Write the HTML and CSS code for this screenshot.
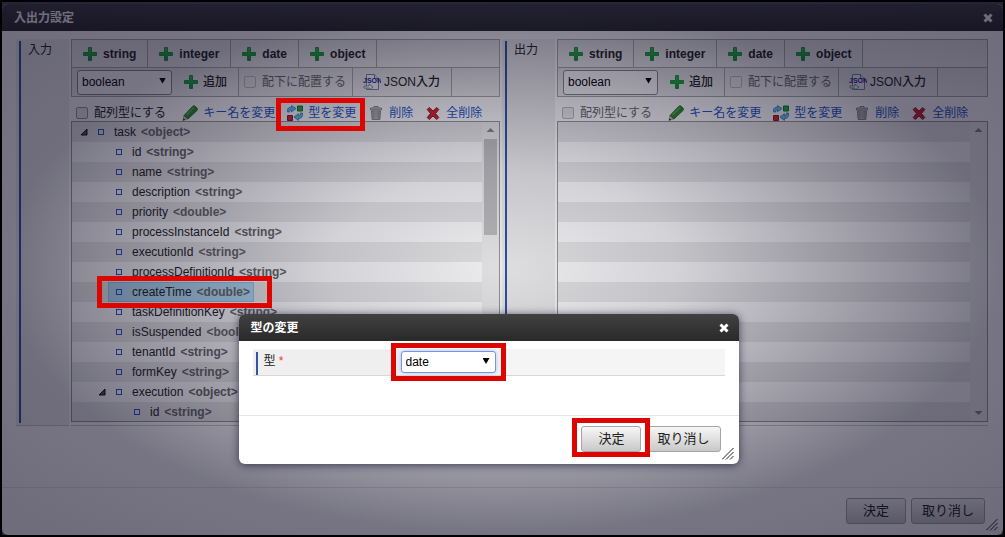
FILE: index.html
```html
<!DOCTYPE html>
<html lang="ja">
<head>
<meta charset="utf-8">
<title>入出力設定</title>
<link rel="stylesheet" href="styles.css">
</head>
<body>
<svg class="sprite" aria-hidden="true">
  <defs>
    <linearGradient id="green" x1="0" y1="0" x2="0" y2="1"><stop offset="0" stop-color="#35bd48"/><stop offset="1" stop-color="#089a2c"/></linearGradient>
    <linearGradient id="metal" x1="0" y1="0" x2="1" y2="0"><stop offset="0" stop-color="#a2a2a2"/><stop offset=".5" stop-color="#dcdcdc"/><stop offset="1" stop-color="#999"/></linearGradient>
  </defs>
  <symbol id="plus" viewBox="0 0 16 16"><path d="M6.500 1.500h3v5h5v3h-5v5h-3v-5h-5v-3h5z" fill="url(#green)" stroke="#1b9a3a"/></symbol>
  <symbol id="pencil" viewBox="0 0 16 16"><path d="M1 15.500 2 10.500 5.500 14z" fill="#e9cf9f" stroke="#86704b" stroke-width=".6"/><path d="m1 15.500.6-2.200 1.600 1.500z" fill="#222"/><path d="M2 10.500 10.500 1.500c1-1 2-1 3 0l1.500 1.500c.8.8.8 1.600 0 2.500L6 14z" fill="#2f8a2c" stroke="#1b661c" stroke-width=".8"/><path d="m4.500 10 7.500-7.700" stroke="#5cae4c" stroke-width="1.500"/></symbol>
  <symbol id="types" viewBox="0 0 16 16"><path d="M10.500 1h5v5h-5z" fill="#22ae3d" stroke="#11772a"/><path d="M.5 10.500h5v5h-5z" fill="#d52535" stroke="#941522"/><path d="M.6 7V5.200C.6 3 2 2.200 4.500 2.200V.6L9 3.600 4.500 6.800V5C3 5 2.600 5.500 2.600 7z" fill="#69c1f2" stroke="#247cae" stroke-width=".8"/><path d="M15.400 8v2c0 2.600-1.500 3.400-4 3.400v2L7 12l4.400-3.300v2c1.600 0 2-.7 2-2.700z" fill="#69c1f2" stroke="#247cae" stroke-width=".8"/></symbol>
  <symbol id="trash" viewBox="0 0 16 16"><path d="M6 3V1.500h4V3" fill="none" stroke="#888"/><path d="M2.500 3h11v2h-11z" fill="#ccc" stroke="#888"/><path d="M3.500 6h9l-.6 8.500H4.100z" fill="url(#metal)" stroke="#888"/><path d="M6 7v6.500M8 7v6.500M10 7v6.500" stroke="#888"/></symbol>
  <symbol id="cross" viewBox="0 0 16 16"><path d="M4.200 2.500 8 6l3.800-3.500 2 2L10.500 8.500l3.300 4-2 2L8 11l-3.800 3.500-2-2 3.300-4-3.300-4z" fill="#d92331" stroke="#981a25"/></symbol>
  <symbol id="page" viewBox="0 0 18 16"><path d="M3.500.5h8l4 4v11h-12z" fill="#f4f9fc" stroke="#72889b"/><path d="M11.500.5v4h4" fill="#d8e7f0" stroke="#72889b"/><path d="M1 12h5v-2l4 3-4 3v-2H1z" fill="#fff" stroke="#66808e" stroke-width=".8"/></symbol>
  <symbol id="close" viewBox="0 0 10 10"><path d="m1.500 1.500 7 7m0-7-7 7" stroke="currentColor" stroke-width="3"/></symbol>
  <symbol id="grip" viewBox="0 0 12 12"><path d="M0 11.500 11.500 0M4 11.500 11.500 4M8 11.500 11.500 8" stroke="#222" fill="none"/></symbol>
  <symbol id="open" viewBox="0 0 8 8"><path d="M7 1v6H1z" fill="#555" stroke="#111"/></symbol>
</svg>

<main class="window">
  <header class="titlebar">
    <h1>入出力設定</h1>
    <button class="close" aria-label="閉じる"><svg><use href="#close"/></svg></button>
  </header>

  <div class="panels">
    <section class="panel">
      <h2 class="side-label">入力</h2>
      <div class="editor">
        <div class="toolbar">
          <button class="tool"><svg><use href="#plus"/></svg>string</button>
          <button class="tool"><svg><use href="#plus"/></svg>integer</button>
          <button class="tool"><svg><use href="#plus"/></svg>date</button>
          <button class="tool"><svg><use href="#plus"/></svg>object</button>
        </div>
        <div class="toolbar second">
          <div class="add-group">
            <span class="select"><select aria-label="入力の型"><option>boolean</option></select></span>
            <button class="add"><svg><use href="#plus"/></svg>追加</button>
          </div>
          <label class="check muted nested"><input type="checkbox" disabled>配下に配置する</label>
          <button class="tool json"><svg viewBox="0 0 18 16"><use href="#page"/><text x="0" y="9" class="json-mark">JSON</text></svg>JSON入力</button>
        </div>
        <div class="actions">
          <label class="check"><input type="checkbox">配列型にする</label>
          <a class="rename" href="#"><svg><use href="#pencil"/></svg>キー名を変更</a>
          <a class="retype" href="#"><svg><use href="#types"/></svg>型を変更<span class="mark mark-link"></span></a>
          <a class="remove" href="#"><svg><use href="#trash"/></svg>削除</a>
          <a class="clear" href="#"><svg><use href="#cross"/></svg>全削除</a>
        </div>
        <div class="tree">
          <ul class="rows">
            <li class="row"><svg class="arrow"><use href="#open"/></svg><span class="node">task <b>&lt;object&gt;</b></span></li>
            <li class="row deep"><span class="node">id <b>&lt;string&gt;</b></span></li>
            <li class="row deep"><span class="node">name <b>&lt;string&gt;</b></span></li>
            <li class="row deep"><span class="node">description <b>&lt;string&gt;</b></span></li>
            <li class="row deep"><span class="node">priority <b>&lt;double&gt;</b></span></li>
            <li class="row deep"><span class="node">processInstanceId <b>&lt;string&gt;</b></span></li>
            <li class="row deep"><span class="node">executionId <b>&lt;string&gt;</b></span></li>
            <li class="row deep"><span class="node">processDefinitionId <b>&lt;string&gt;</b></span></li>
            <li class="row deep"><span class="node selected">createTime <b>&lt;double&gt;</b><span class="mark mark-node"></span></span></li>
            <li class="row deep"><span class="node">taskDefinitionKey <b>&lt;string&gt;</b></span></li>
            <li class="row deep"><span class="node">isSuspended <b>&lt;boolean&gt;</b></span></li>
            <li class="row deep"><span class="node">tenantId <b>&lt;string&gt;</b></span></li>
            <li class="row deep"><span class="node">formKey <b>&lt;string&gt;</b></span></li>
            <li class="row deep"><svg class="arrow"><use href="#open"/></svg><span class="node">execution <b>&lt;object&gt;</b></span></li>
            <li class="row deeper"><span class="node">id <b>&lt;string&gt;</b></span></li>
          </ul>
          <div class="scroll"><i class="up"></i><i class="thumb"></i></div>
        </div>
      </div>
    </section>

    <section class="panel">
      <h2 class="side-label">出力</h2>
      <div class="editor">
        <div class="toolbar">
          <button class="tool"><svg><use href="#plus"/></svg>string</button>
          <button class="tool"><svg><use href="#plus"/></svg>integer</button>
          <button class="tool"><svg><use href="#plus"/></svg>date</button>
          <button class="tool"><svg><use href="#plus"/></svg>object</button>
        </div>
        <div class="toolbar second">
          <div class="add-group">
            <span class="select"><select aria-label="出力の型"><option>boolean</option></select></span>
            <button class="add"><svg><use href="#plus"/></svg>追加</button>
          </div>
          <label class="check muted nested"><input type="checkbox" disabled>配下に配置する</label>
          <button class="tool json"><svg viewBox="0 0 18 16"><use href="#page"/><text x="0" y="9" class="json-mark">JSON</text></svg>JSON入力</button>
        </div>
        <div class="actions">
          <label class="check muted"><input type="checkbox" disabled>配列型にする</label>
          <a class="rename" href="#"><svg><use href="#pencil"/></svg>キー名を変更</a>
          <a class="retype" href="#"><svg><use href="#types"/></svg>型を変更</a>
          <a class="remove" href="#"><svg><use href="#trash"/></svg>削除</a>
          <a class="clear" href="#"><svg><use href="#cross"/></svg>全削除</a>
        </div>
        <div class="tree">
          <ul class="rows"></ul>
          <div class="scroll"><i class="up"></i><i class="down"></i></div>
        </div>
      </div>
    </section>
  </div>

  <footer class="footer">
    <button class="btn">決定</button>
    <button class="btn">取り消し</button>
    <svg class="grip"><use href="#grip"/></svg>
  </footer>
</main>
<div class="overlay"></div>

<div class="dialog" role="dialog" aria-labelledby="dialog-title">
  <header class="titlebar">
    <h1 id="dialog-title">型の変更</h1>
    <button class="close" aria-label="閉じる"><svg><use href="#close"/></svg></button>
  </header>
  <form class="form">
    <div class="field">
      <label class="field-name" for="type">型 <em>*</em></label>
      <span class="select focused"><select id="type"><option>date</option></select><span class="mark mark-select"></span></span>
    </div>
  </form>
  <footer class="footer">
    <button class="btn primary">決定<span class="mark mark-button"></span></button>
    <button class="btn">取り消し</button>
    <svg class="grip"><use href="#grip"/></svg>
  </footer>
</div>
</body>
</html>
```
FILE: styles.css
```css
*, *::before, *::after { box-sizing: border-box; }

body {
  margin: 0;
  min-height: 100vh;
  display: flex;
  position: relative;
  border: 2px solid #000;
  padding-top: 2px;
  background: #4c4b58;
  color: #222;
  font: 12px/16px "Liberation Sans", "Noto Sans CJK JP", sans-serif;
}

h1, h2, ul { margin: 0; padding: 0; font-size: 12px; list-style: none; }
button, select { font: inherit; color: inherit; }
button { border: 0; padding: 0; background: none; }
svg { width: 16px; height: 16px; flex: none; }
.sprite { position: absolute; width: 0; height: 0; }
.json-mark { font: bold 7px "Liberation Sans", sans-serif; fill: #2a1a9a; }

.window {
  flex: 1;
  min-width: 0;
  display: flex;
  flex-direction: column;
  border-radius: 6px;
  background: #fff;
  overflow: hidden;
}

.titlebar {
  display: flex;
  align-items: center;
  justify-content: space-between;
  height: 27px;
  padding: 0 10px 0 12px;
  background: linear-gradient(#414141, #292929);
  color: #fff;
}
.close { display: flex; }
.close svg { width: 10px; height: 10px; }

.panels {
  display: grid;
  grid-template-columns: 484fr 486fr;
  gap: 2px;
  padding: 8px 15px 0 14px;
}
.panel {
  display: grid;
  grid-template-columns: 53px 1fr;
  column-gap: 2px;
}
.side-label {
  padding: 3px 0 0 12px;
  border-bottom: 1px solid #ccc;
  font-weight: normal;
  background: linear-gradient(#2f55a4, #2f55a4) 3px 2px / 2px calc(100% - 4px) no-repeat, #f0f0f0;
}
.editor { min-width: 0; padding-bottom: 3px; border-bottom: 1px solid #ccc; }

.toolbar {
  display: flex;
  height: 28px;
  border: 1px solid #aaa;
  border-bottom: 0;
  background: linear-gradient(#e8e8e8, #f2f2f2);
}
.toolbar.second { height: 30px; border-bottom: 1px solid #aaa; }
.tool {
  display: flex;
  align-items: center;
  gap: 5px;
  padding: 0 11px 0 10px;
  border-right: 1px solid #aaa;
  font-weight: bold;
}
.add-group {
  display: flex;
  align-items: center;
  gap: 11px;
  padding: 0 11px 0 5px;
  border-right: 1px solid #aaa;
}
.add { display: flex; align-items: center; gap: 4px; font-weight: 500; }
.nested { padding: 0 6px 0 5px; border-right: 1px solid #aaa; }
.json { gap: 3px; font-weight: 500; }
.json svg { width: 18px; }
.check { display: flex; align-items: center; gap: 6px; }
.check input {
  appearance: none;
  width: 12px;
  height: 12px;
  margin: 0;
  border: 1px solid #999;
  border-radius: 2px;
  background: #eee;
}
.muted { color: #666; }
.muted input { border-color: #bbb; }

.select { position: relative; display: flex; width: 95px; height: 25px; }
.select select {
  appearance: none;
  width: 100%;
  padding: 0 4px;
  border: 1px solid #888;
  border-radius: 3px;
  background: #fff;
  color: #000;
}
.select::after {
  content: "";
  position: absolute;
  top: 8px;
  right: 6px;
  width: 7px;
  height: 6px;
  background: #000;
  clip-path: polygon(0 0, 100% 0, 50% 100%);
}

.actions {
  display: flex;
  align-items: center;
  height: 24px;
  padding: 7px 0 0 5px;
  white-space: nowrap;
}
.actions a {
  position: relative;
  display: flex;
  align-items: center;
  gap: 5px;
  color: #1c54c8;
  text-decoration: none;
}
.actions .rename { margin-left: 16px; }
.actions .retype { margin-left: 12px; }
.actions .remove { margin-left: 12px; }
.actions .clear { margin-left: 12px; }

.tree { display: flex; border: 1px solid #999; background: #f0f0f0; }
.rows {
  flex: 1;
  min-width: 0;
  height: 299px;
  background: repeating-linear-gradient(#ebebeb 0 20px, #fff 20px 40px);
}
.row { display: flex; align-items: center; height: 20px; padding-left: 8px; }
.row.deep { padding-left: 26px; }
.row.deep:not(:has(.arrow)) { padding-left: 36px; }
.row.deeper:not(:has(.arrow)) { padding-left: 54px; }
.arrow { width: 8px; height: 8px; margin-right: 2px; }
.node {
  position: relative;
  display: flex;
  align-items: center;
  gap: 5px;
  height: 20px;
  padding: 0 3px 0 7px;
  border: 1px solid transparent;
  white-space: nowrap;
}
.node::before {
  content: "";
  width: 6px;
  height: 6px;
  margin-right: 5px;
  border: 1px solid #2857c7;
}
.node b { color: #686868; }
.selected { border-color: #84cdef; background: #b3dcf3; }

.scroll {
  display: flex;
  flex-direction: column;
  align-items: center;
  width: 17px;
  padding: 6px 2px;
}
.up, .down { width: 8px; height: 4px; background: #888; clip-path: polygon(50% 0, 100% 100%, 0 100%); }
.down { margin-top: auto; clip-path: polygon(0 0, 100% 0, 50% 100%); }
.thumb { width: 13px; height: 96px; margin-top: 7px; background: #c1c1c1; }

.footer {
  position: relative;
  display: flex;
  justify-content: flex-end;
  gap: 5px;
  margin-top: auto;
  padding: 10px 18px 11px;
  border-top: 1px solid #e6e6e6;
}
.dialog .footer { padding-bottom: 12px; }
.btn {
  position: relative;
  height: 26px;
  padding: 0 10px;
  border: 1px solid #a5a5a5;
  border-radius: 3px;
  background: linear-gradient(#f7f7f7, #c8c8c8);
  color: #222;
  font-size: 13px;
}
.btn:first-child { padding: 0 16px; }
.grip { position: absolute; right: 5px; bottom: 4px; width: 12px; height: 12px; }

.overlay {
  position: absolute;
  inset: 0;
  z-index: 1;
  background: radial-gradient(rgba(12, 9, 34, .08), rgba(12, 9, 34, .18) 25%, rgba(12, 9, 34, .39) 50%, rgba(12, 9, 34, .56) 70%, rgba(12, 9, 34, .6));
}

.dialog {
  position: absolute;
  z-index: 3;
  top: 312px;
  left: calc(50% - 264px);
  width: 500px;
  border-radius: 6px;
  background: #fff;
  box-shadow: 0 1px 8px rgba(20, 15, 50, .7);
}
.dialog .titlebar { border-radius: 6px 6px 0 0; }
.form { padding: 8px 14px 39px; }
.field {
  display: flex;
  align-items: center;
  height: 27px;
  border-bottom: 1px solid #d8d8d8;
  background: #f5f5f5;
}
.field-name {
  width: 148px;
  height: 25px;
  padding: 3px 0 0 11px;
  background: linear-gradient(#2f55a4, #2f55a4) 3px 2px / 2px 100% no-repeat, #efefef;
}
.field-name em { color: #e33; font-style: normal; }
.focused { height: 22px; }
.focused select { outline: 0; border-color: #7c93dd; box-shadow: 0 0 4px #a9bdf5; }
.focused::after { top: 7px; }

.mark { position: absolute; z-index: 2; border: 5px solid #dd0500; pointer-events: none; }
.mark-link { inset: -7px -9px -10px -11px; }
.mark-node { inset: -7px -19px -7px -12px; }
.mark-select { inset: -8px -10px; }
.mark-button { inset: -9px -10px -6px; }
```
